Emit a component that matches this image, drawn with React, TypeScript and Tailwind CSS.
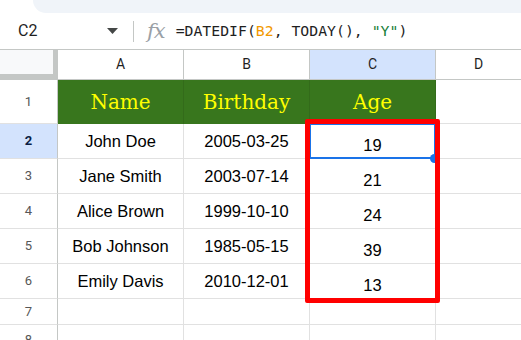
import React from "react";

interface Person {
  name: string;
  birthday: string;
  age: number;
}

const people: Person[] = [
  { name: "John Doe", birthday: "2005-03-25", age: 19 },
  { name: "Jane Smith", birthday: "2003-07-14", age: 21 },
  { name: "Alice Brown", birthday: "1999-10-10", age: 24 },
  { name: "Bob Johnson", birthday: "1985-05-15", age: 39 },
  { name: "Emily Davis", birthday: "2010-12-01", age: 13 },
];

const sans = { fontFamily: "Roboto, 'Liberation Sans', Arial, sans-serif" };
const arial = { fontFamily: "'Liberation Sans', Arial, sans-serif" };
const serif = { fontFamily: "'DejaVu Serif', 'Liberation Serif', serif" };
const mono = { fontFamily: "'DejaVu Sans Mono', 'Liberation Mono', monospace" };

function RowHeader({ n, active }: { n: number; active?: boolean }) {
  return (
    <div
      className={`flex items-center justify-center border-r border-b border-r-[#c4c7c5] border-b-[#e1e1e1] text-[13px] ${
        active ? "bg-[#d3e3fd] font-bold text-[#0b1f44]" : "bg-white text-[#575757]"
      }`}
      style={sans}
    >
      {n}
    </div>
  );
}

export default function App() {
  return (
    <div className="relative w-[521px] h-[340px] overflow-hidden bg-white">
      {/* toolbar edge */}
      <div className="flex h-[13px]">
        <div className="ml-[33px] flex-1 bg-[#f0f4f9] rounded-bl-[14px]" />
      </div>

      {/* formula bar */}
      <div className="flex items-center h-[37px] border-b border-[#c4c7c5]">
        <div className="w-[100px] pl-[18px] text-[16px] text-[#1f1f1f]" style={sans}>
          C2
        </div>
        <svg width="11" height="6" viewBox="0 0 11 6" className="ml-[7px]">
          <path d="M0 0 L11 0 L5.5 6 Z" fill="#444746" />
        </svg>
        <div className="ml-[15px] h-[21px] w-px bg-[#c4c7c5]" />
        <div
          className="ml-[13px] text-[21px] italic text-[#9aa0a6] leading-none tracking-[-1px]"
          style={serif}
        >
          fx
        </div>
        <div className="ml-[11px] text-[14.8px] text-[#1f1f1f] whitespace-pre" style={mono}>
          =DATEDIF(<span className="text-[#f29900]">B2</span>, TODAY(),{" "}
          <span className="text-[#188038]">"Y"</span>)
        </div>
      </div>

      {/* sheet grid */}
      <div className="grid grid-cols-[58px_126px_126px_126px_1fr] grid-rows-[30px_44px_35px_35px_35px_35px_35px_26px_30px]">
        {/* column headers */}
        <div className="bg-[#f8f9fa] border-r-[5px] border-b-[6px] border-[#c4c7c5]" />
        {["A", "B", "C", "D"].map((c) => (
          <div
            key={c}
            className={`flex items-center justify-center border-b border-[#c4c7c5] text-[14px] text-[#1f1f1f] ${
              c === "C" ? "bg-[#d3e3fd]" : "bg-white"
            } ${c === "D" ? "" : "border-r"}`}
            style={sans}
          >
            {c}
          </div>
        ))}

        {/* header row */}
        <RowHeader n={1} />
        {["Name", "Birthday", "Age"].map((h) => (
          <div
            key={h}
            className="flex items-center justify-center bg-[#38761d] border-r border-[#336b1a] text-[20px] text-[#ffff00]"
            style={serif}
          >
            {h}
          </div>
        ))}
        <div className="border-b border-[#e1e1e1]" />

        {/* data rows */}
        {people.map((p, i) => (
          <React.Fragment key={p.name}>
            <RowHeader n={i + 2} active={i === 0} />
            <div
              className="flex items-center justify-center border-r border-b border-[#e1e1e1] text-[16.5px] text-black"
              style={arial}
            >
              {p.name}
            </div>
            <div
              className="flex items-center justify-center border-r border-b border-[#e1e1e1] text-[16.5px] text-black"
              style={arial}
            >
              {p.birthday}
            </div>
            <div
              className="flex items-end justify-center border-r border-b border-[#e1e1e1] text-[16.5px] text-black"
              style={arial}
            >
              {p.age}
            </div>
            <div className="border-b border-[#e1e1e1]" />
          </React.Fragment>
        ))}

        {/* empty rows */}
        {[7, 8].map((n) => (
          <React.Fragment key={n}>
            <RowHeader n={n} />
            <div className="border-r border-b border-[#e1e1e1]" />
            <div className="border-r border-b border-[#e1e1e1]" />
            <div className="border-r border-b border-[#e1e1e1]" />
            <div className="border-b border-[#e1e1e1]" />
          </React.Fragment>
        ))}
      </div>

      {/* selection on C2 */}
      <div className="absolute left-[309px] top-[123px] w-[127px] h-[36px] border-2 border-[#1a73e8]" />
      <div className="absolute left-[430px] top-[154px] w-[9px] h-[9px] rounded-full bg-[#1a73e8]" />

      {/* red highlight */}
      <div className="absolute left-[305px] top-[119px] w-[135px] h-[184px] border-[5px] border-[#ff0000] rounded-[2px]" />
    </div>
  );
}
